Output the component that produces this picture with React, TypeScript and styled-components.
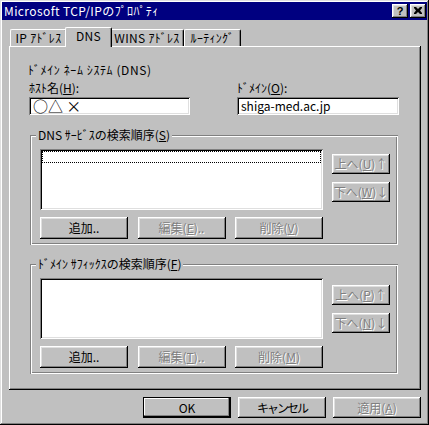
import React from "react";
import styled, { createGlobalStyle, css } from "styled-components";

const FONT = `"Noto Sans CJK JP", "Liberation Sans", sans-serif`;

const GlobalStyle = createGlobalStyle`
  html, body { margin: 0; padding: 0; background: #c0c0c0; }
  * { box-sizing: border-box; }
`;

const raised = css`
  box-shadow: inset -1px -1px #000, inset 1px 1px #fff, inset -2px -2px #808080,
    inset 2px 2px #dfdfdf;
`;

const sunken = css`
  box-shadow: inset 1px 1px #808080, inset -1px -1px #fff, inset 2px 2px #000,
    inset -2px -2px #dfdfdf;
`;

const Window = styled.div`
  width: 429px;
  height: 425px;
  padding: 2px;
  background: #c0c0c0;
  box-shadow: inset -1px -1px #000, inset 1px 1px #dfdfdf, inset -2px -2px #808080,
    inset 2px 2px #fff;
  display: flex;
  flex-direction: column;
  font-family: ${FONT};
  font-size: 12px;
  color: #000;
`;

const TitleBar = styled.div`
  height: 18px;
  background: #000080;
  color: #fff;
  display: flex;
  align-items: center;
  justify-content: space-between;
  padding: 0 1px 0 2px;
`;

const Title = styled.span`
  font-size: 12px;
  line-height: 18px;
  white-space: nowrap;
  letter-spacing: 0.4px;
`;

const CaptionButtons = styled.div`
  display: flex;
  gap: 2px;
`;

const CaptionButton = styled.div`
  width: 16px;
  height: 14px;
  background: #c0c0c0;
  color: #000;
  ${raised};
  display: flex;
  align-items: center;
  justify-content: center;
  font: bold 11px "Liberation Sans", sans-serif;
  padding-bottom: 1px;
`;

const Body = styled.div`
  flex: 1;
  display: flex;
  flex-direction: column;
  padding: 0 6px 0 7px;
`;

const TabStrip = styled.div`
  height: 26px;
  display: flex;
  align-items: flex-end;
  padding-left: 1px;
`;

const Tab = styled.div<{ $w: number; $active?: boolean }>`
  width: ${(p) => p.$w}px;
  height: 17px;
  background: #c0c0c0;
  border-top: 1px solid #fff;
  border-left: 1px solid #fff;
  border-right: 1px solid #000;
  border-radius: 2px 2px 0 0;
  box-shadow: inset -1px 0 #808080;
  display: flex;
  align-items: center;
  justify-content: center;
  white-space: nowrap;
  line-height: 14px;
  letter-spacing: 0.3px;
  padding-bottom: 1px;
  ${(p) =>
    p.$active &&
    css`
      height: 20px;
      margin: 0 -2px -1px;
      position: relative;
      z-index: 2;
      padding-bottom: 4px;
    `}
`;

const Panel = styled.div`
  height: 344px;
  background: #c0c0c0;
  box-shadow: inset -1px -1px #000, inset 1px 1px #fff, inset -2px -2px #808080;
  padding: 17px 22px 0 20px;
  display: flex;
  flex-direction: column;
`;

const Heading = styled.div`
  line-height: 14px;
  height: 14px;
  white-space: nowrap;
  letter-spacing: 0.6px;
  margin-left: -1px;
`;

const FieldRow = styled.div`
  margin-top: 4px;
  display: flex;
  gap: 47px;
`;

const Field = styled.div<{ $w: number }>`
  width: ${(p) => p.$w}px;
  display: flex;
  flex-direction: column;
  gap: 2px;
`;

const Label = styled.div`
  line-height: 14px;
  height: 14px;
  white-space: nowrap;
`;

const TextBox = styled.div<{ $big?: boolean }>`
  height: 18px;
  background: #fff;
  ${sunken};
  padding: 0 4px;
  display: flex;
  align-items: center;
  white-space: nowrap;
  font-size: ${(p) => (p.$big ? 15 : 12)}px;
  line-height: 14px;
`;

const Group = styled.div<{ $mt: number }>`
  position: relative;
  margin-top: ${(p) => p.$mt}px;
  margin-left: 1px;
  width: 368px;
  height: 110px;
  box-shadow: inset 1px 1px #808080, inset -1px -1px #fff, inset 2px 2px #fff,
    inset -2px -2px #808080;
  padding: 14px 8px 0 10px;
  display: flex;
  flex-direction: column;
`;

const Legend = styled.div`
  position: absolute;
  top: -7px;
  left: 6px;
  padding: 0 2px;
  background: #c0c0c0;
  line-height: 14px;
  white-space: nowrap;
`;

const GroupTop = styled.div`
  display: flex;
  gap: 9px;
`;

const ListBox = styled.div`
  width: 283px;
  height: 61px;
  background: #fff;
  ${sunken};
  padding: 2px 2px;
`;

const FocusRow = styled.div`
  height: 12px;
  border: 1px dotted #000;
`;

const SideButtons = styled.div<{ $pt: number }>`
  padding-top: ${(p) => p.$pt}px;
  display: flex;
  flex-direction: column;
  gap: 8px;
`;

const ButtonRow = styled.div`
  margin-top: 7px;
  width: 283px;
  display: flex;
  justify-content: space-between;
`;

const Button = styled.button<{ $w: number; $h: number; $default?: boolean; $ls?: number }>`
  width: ${(p) => p.$w}px;
  height: ${(p) => p.$h}px;
  padding: 0;
  border: none;
  background: #c0c0c0;
  font: inherit;
  letter-spacing: ${(p) => p.$ls ?? 0}px;
  color: ${(p) => (p.disabled ? "#808080" : "#000")};
  text-shadow: ${(p) => (p.disabled ? "1px 1px 0 #fff" : "none")};
  line-height: 14px;
  white-space: nowrap;
  display: flex;
  align-items: center;
  justify-content: center;
  ${raised};
  ${(p) =>
    p.$default &&
    css`
      box-shadow: inset 0 0 0 1px #000, inset -2px -2px #000, inset -3px -3px #808080,
        inset 2px 2px #fff;
    `}
`;

const Key = styled.u`
  text-underline-offset: 1px;
`;

const Footer = styled.div`
  margin-top: 7px;
  display: flex;
  justify-content: flex-end;
  gap: 7px;
`;

const CloseGlyph = () => (
  <svg width="8" height="7" viewBox="0 0 8 7">
    <path d="M0 0h2l2 2 2-2h2v1L6 3.5 8 6v1H6L4 5 2 7H0V6l2-2.5L0 1z" fill="#000" />
  </svg>
);

type GroupProps = {
  mt: number;
  legend: React.ReactNode;
  focus?: boolean;
  up: string;
  down: string;
  edit: string;
  del: string;
  sidePt: number;
};

const OrderGroup = ({ mt, legend, focus, up, down, edit, del, sidePt }: GroupProps) => (
  <Group $mt={mt}>
    <Legend>{legend}</Legend>
    <GroupTop>
      <ListBox>{focus && <FocusRow />}</ListBox>
      <SideButtons $pt={sidePt}>
        <Button $w={58} $h={20} disabled>
          上へ(<Key>{up}</Key>)↑
        </Button>
        <Button $w={58} $h={20} disabled>
          下へ(<Key>{down}</Key>)↓
        </Button>
      </SideButtons>
    </GroupTop>
    <ButtonRow>
      <Button $w={88} $h={22}>追加..</Button>
      <Button $w={88} $h={22} disabled>
        編集(<Key>{edit}</Key>)..
      </Button>
      <Button $w={88} $h={22} disabled>
        削除(<Key>{del}</Key>)
      </Button>
    </ButtonRow>
  </Group>
);

export default function App() {
  return (
    <>
      <GlobalStyle />
      <Window>
        <TitleBar>
          <Title>Microsoft TCP/IPのﾌﾟﾛﾊﾟﾃｨ</Title>
          <CaptionButtons>
            <CaptionButton>?</CaptionButton>
            <CaptionButton>
              <CloseGlyph />
            </CaptionButton>
          </CaptionButtons>
        </TitleBar>
        <Body>
          <TabStrip>
            <Tab $w={57}>IP ｱﾄﾞﾚｽ</Tab>
            <Tab $w={47} $active>
              DNS
            </Tab>
            <Tab $w={74}>WINS ｱﾄﾞﾚｽ</Tab>
            <Tab $w={57}>ﾙｰﾃｨﾝｸﾞ</Tab>
          </TabStrip>
          <Panel>
            <Heading>ﾄﾞﾒｲﾝ ﾈｰﾑ ｼｽﾃﾑ (DNS)</Heading>
            <FieldRow>
              <Field $w={161}>
                <Label>
                  ﾎｽﾄ名(<Key>H</Key>):
                </Label>
                <TextBox $big>○△ ×</TextBox>
              </Field>
              <Field $w={162}>
                <Label>
                  ﾄﾞﾒｲﾝ(<Key>O</Key>):
                </Label>
                <TextBox>shiga-med.ac.jp</TextBox>
              </Field>
            </FieldRow>
            <OrderGroup
              mt={20}
              legend={
                <>
                  DNS ｻｰﾋﾞｽの検索順序(<Key>S</Key>)
                </>
              }
              focus
              up="U"
              down="W"
              edit="E"
              del="V"
              sidePt={5}
            />
            <OrderGroup
              mt={19}
              legend={
                <>
                  ﾄﾞﾒｲﾝ ｻﾌｨｯｸｽの検索順序(<Key>F</Key>)
                </>
              }
              up="P"
              down="N"
              edit="T"
              del="M"
              sidePt={7}
            />
          </Panel>
          <Footer>
            <Button $w={88} $h={21} $default>
              OK
            </Button>
            <Button $w={88} $h={21} $ls={-2}>
              キャンセル
            </Button>
            <Button $w={88} $h={21} disabled>
              適用(<Key>A</Key>)
            </Button>
          </Footer>
        </Body>
      </Window>
    </>
  );
}
